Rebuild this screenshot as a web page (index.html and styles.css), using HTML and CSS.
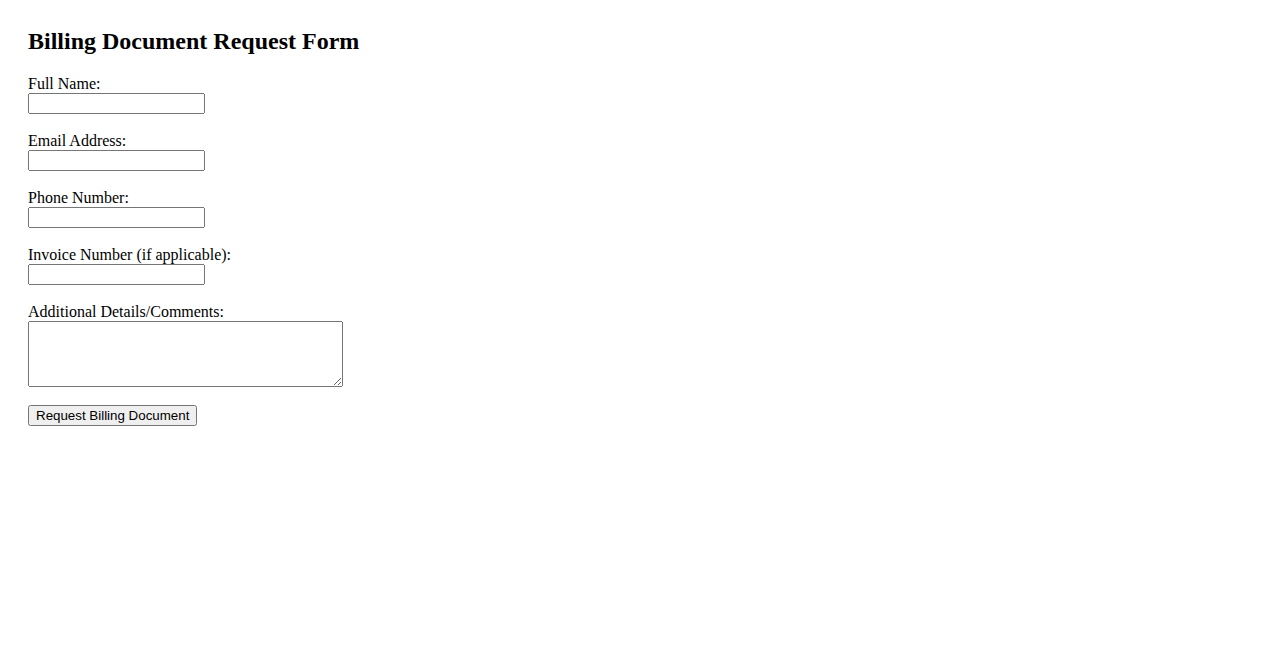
FILE: index.html
```html
<!DOCTYPE html>
<html lang="en">
<head>
  <meta charset="UTF-8">
  <title>Billing Document Request Form</title>
  <link rel="stylesheet" href="styles.css">
</head>
<body>

<h2>Billing Document Request Form</h2>

<form id="billingForm">
  <div class="field">
    <label for="fullName">Full Name:</label><br>
    <input type="text" id="fullName" name="fullName">
  </div>
  <div class="field">
    <label for="email">Email Address:</label><br>
    <input type="email" id="email" name="email">
  </div>
  <div class="field">
    <label for="phone">Phone Number:</label><br>
    <input type="tel" id="phone" name="phone">
  </div>
  <div class="field">
    <label for="invoice">Invoice Number (if applicable):</label><br>
    <input type="text" id="invoice" name="invoice">
  </div>
  <div class="field comments">
    <label for="details">Additional Details/Comments:</label><br>
    <textarea id="details" name="details"></textarea>
  </div>
  <button type="submit">Request Billing Document</button>
</form>

</body>
</html>
```

FILE: styles.css
```css
body {
  font-family: "Liberation Serif", "Times New Roman", serif;
  font-size: 16px;
  margin: 0;
  padding: 28px;
}
h2 {
  font-size: 24px;
  margin: 0 0 20px;
}
.field {
  margin-bottom: 18px;
}
.field.comments {
  margin-bottom: 14px;
}
input, textarea, button {
  font-family: "Liberation Sans", Arial, sans-serif;
  font-size: 13.333px;
}
input {
  width: 177px;
  height: 21px;
  box-sizing: border-box;
}
textarea {
  width: 315px;
  height: 66px;
  box-sizing: border-box;
}
```
